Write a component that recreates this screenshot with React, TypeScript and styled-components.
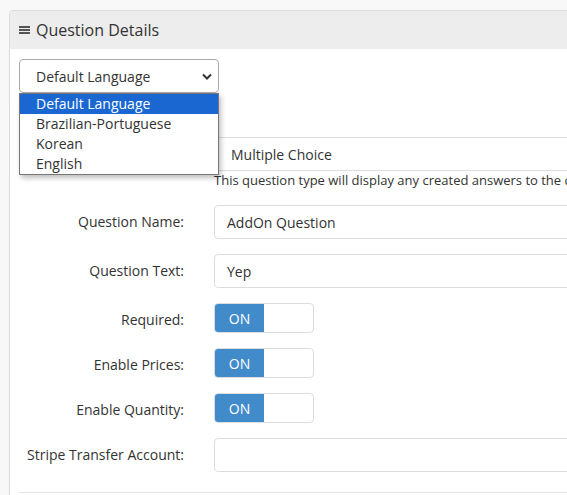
import styled, { createGlobalStyle } from "styled-components";

const GlobalStyle = createGlobalStyle`
  html, body {
    margin: 0;
    background: #f8f8f8;
    overflow: hidden;
  }
  body {
    font-family: "Open Sans", "Liberation Sans", sans-serif;
    font-size: 14px;
    color: #333;
  }
  * {
    box-sizing: border-box;
  }
`;

const Page = styled.div`
  padding: 10px 0 0 9px;
`;

const Panel = styled.section`
  width: 760px;
  border: 1px solid #ddd;
  border-radius: 4px;
  background: #fff;
`;

const PanelHeader = styled.div`
  height: 38px;
  display: flex;
  align-items: center;
  gap: 6px;
  padding: 0 9px;
  background: #ededed;
  border-radius: 4px 4px 0 0;
  font-size: 16px;
  color: #333;
`;

const PanelBody = styled.div`
  padding: 10px 9px 40px;
`;

const LanguagePicker = styled.div`
  position: relative;
  width: 200px;
  margin-bottom: 44px;
`;

const SelectBox = styled.div`
  height: 34px;
  display: flex;
  align-items: center;
  justify-content: space-between;
  padding: 0 6px 0 16px;
  border: 1px solid #aaa;
  border-radius: 4px;
  background: #fff;
  color: #333;
`;

const OptionList = styled.ul`
  position: absolute;
  top: 100%;
  left: 0;
  width: 200px;
  margin: 0;
  padding: 0;
  list-style: none;
  background: #fff;
  border: 1px solid #767676;
  box-shadow: 2px 3px 5px rgba(0, 0, 0, 0.25);
  z-index: 2;
`;

const Option = styled.li<{ $selected?: boolean }>`
  height: 20px;
  line-height: 20px;
  padding-left: 16px;
  background: ${({ $selected }) => ($selected ? "#1a67d2" : "transparent")};
  color: ${({ $selected }) => ($selected ? "#fff" : "#333")};
`;

const FormRow = styled.div<{ $gap?: number }>`
  display: grid;
  grid-template-columns: 165px 500px;
  column-gap: 30px;
  align-items: start;
  margin-bottom: ${({ $gap }) => $gap ?? 15}px;
`;

const Label = styled.label`
  padding-top: 7px;
  line-height: 20px;
  text-align: right;
  white-space: nowrap;
  color: #333;
`;

const TextInput = styled.div<{ $inset?: number }>`
  height: 34px;
  display: flex;
  align-items: center;
  padding: 0 ${({ $inset }) => $inset ?? 12}px;
  border: 1px solid #ddd;
  border-radius: 4px;
  background: #fff;
  color: #333;
`;

const HelpText = styled.div`
  font-size: 13px;
  line-height: 19px;
  white-space: nowrap;
  color: #333;
`;

const Toggle = styled.div`
  width: 100px;
  height: 30px;
  display: flex;
  border: 1px solid #ddd;
  border-radius: 4px;
  overflow: hidden;
  background: #fff;
`;

const ToggleOn = styled.span`
  width: 49px;
  display: flex;
  align-items: center;
  justify-content: center;
  background: #428bca;
  color: #fff;
`;

const Divider = styled.hr`
  margin: 0;
  border: 0;
  border-top: 1px solid #e3e3e3;
`;

const languages = ["Default Language", "Brazilian-Portuguese", "Korean", "English"];

const toggles = ["Required:", "Enable Prices:", "Enable Quantity:"];

function BarsIcon() {
  return (
    <svg width="11" height="8" viewBox="0 0 11 8" fill="#555">
      <rect x="0" y="0" width="11" height="2" />
      <rect x="0" y="3" width="11" height="2" />
      <rect x="0" y="6" width="11" height="2" />
    </svg>
  );
}

function Chevron() {
  return (
    <svg width="10" height="7" viewBox="0 0 10 7" fill="none" stroke="#333" strokeWidth="2">
      <path d="M1 1.5 L5 5.5 L9 1.5" />
    </svg>
  );
}

export default function App() {
  return (
    <>
      <GlobalStyle />
      <Page>
        <Panel>
          <PanelHeader>
            <BarsIcon />
            Question Details
          </PanelHeader>
          <PanelBody>
            <LanguagePicker>
              <SelectBox>
                <span>Default Language</span>
                <Chevron />
              </SelectBox>
              <OptionList>
                {languages.map((lang, i) => (
                  <Option key={lang} $selected={i === 0}>
                    {lang}
                  </Option>
                ))}
              </OptionList>
            </LanguagePicker>

            <FormRow>
              <Label>Question Type:</Label>
              <div>
                <TextInput $inset={16}>Multiple Choice</TextInput>
                <HelpText>
                  This question type will display any created answers to the customer as a list of choices.
                </HelpText>
              </div>
            </FormRow>

            <FormRow>
              <Label>Question Name:</Label>
              <TextInput>AddOn Question</TextInput>
            </FormRow>

            <FormRow>
              <Label>Question Text:</Label>
              <TextInput>Yep</TextInput>
            </FormRow>

            {toggles.map((label) => (
              <FormRow key={label}>
                <Label>{label}</Label>
                <Toggle>
                  <ToggleOn>ON</ToggleOn>
                </Toggle>
              </FormRow>
            ))}

            <FormRow $gap={20}>
              <Label>Stripe Transfer Account:</Label>
              <TextInput />
            </FormRow>

            <Divider />
          </PanelBody>
        </Panel>
      </Page>
    </>
  );
}
